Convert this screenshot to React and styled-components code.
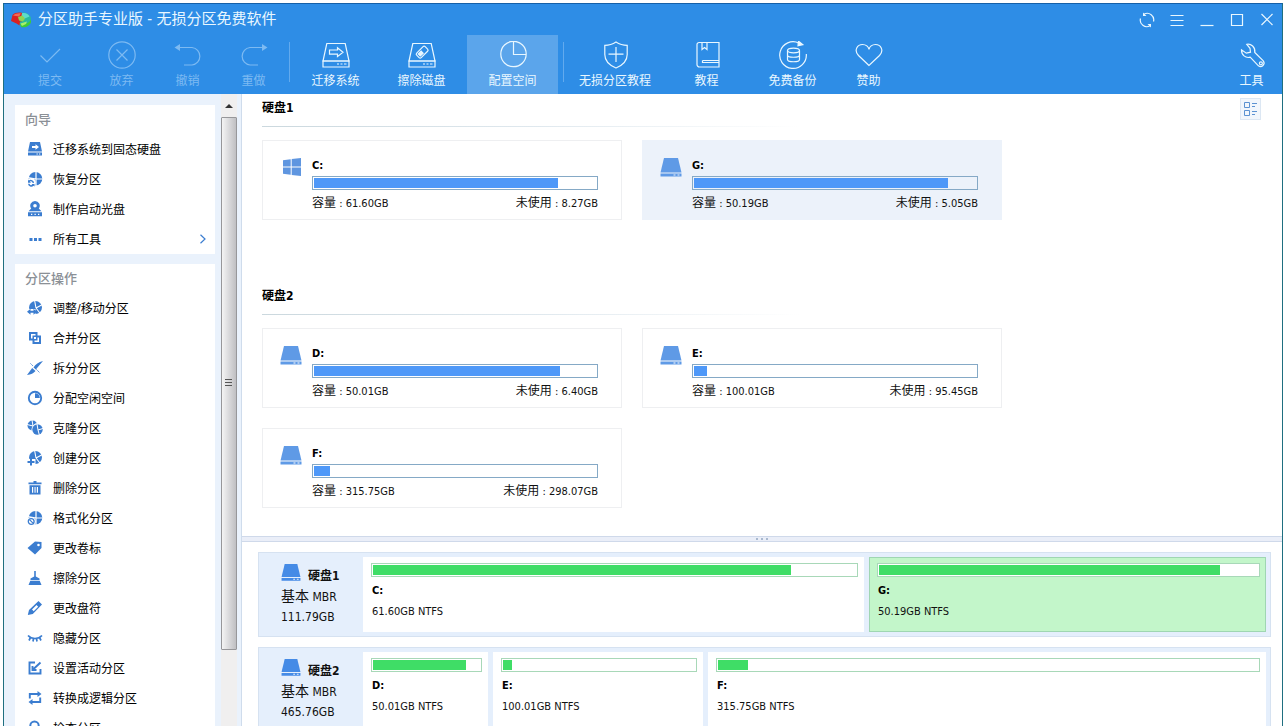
import React from "react";
import styled, { createGlobalStyle, css } from "styled-components";

const GlobalStyle = createGlobalStyle`
  *, *::before, *::after { box-sizing: border-box; }
  html, body { height: 100%; }
  body {
    margin: 0;
    overflow: hidden;
    background: #fff;
    color: #111;
    font: 12px/16px "DejaVu Sans Condensed", "Noto Sans CJK SC", sans-serif;
  }
  button { border: 0; padding: 0; background: none; font: inherit; color: inherit; cursor: default; }
  h1, h2, ul { margin: 0; padding: 0; }
  ul { list-style: none; }
  svg { display: block; flex: none; }
`;

/* ---------- window frame ---------- */

const Page = styled.div`
  height: 100vh;
  padding: 3px 4px 0 3px;
`;

const Window = styled.div`
  height: 100%;
  display: flex;
  flex-direction: column;
  overflow: hidden;
  border: 1px solid #1f6f80;
  border-top-color: #1560a8;
  border-bottom: 0;
`;

const Header = styled.header`
  flex: none;
  background: #2e8de6;
  color: #e9f7ff;
`;

const TitleBar = styled.div`
  display: flex;
  align-items: center;
  gap: 7px;
  height: 31px;
  padding-left: 7px;
`;

const Title = styled.h1`
  flex: 1;
  padding-bottom: 2px;
  font-size: 15px;
  line-height: 20px;
  font-weight: 400;
`;

const WindowControls = styled.div`
  display: flex;
`;

const WindowButton = styled.button`
  width: 30px;
  height: 31px;
  display: flex;
  align-items: center;
  justify-content: center;
`;

const Toolbar = styled.nav`
  display: flex;
  gap: 5px;
  height: 59px;
  padding-left: 10px;
`;

const ToolButton = styled.button`
  width: ${(p) => p.$width}px;
  padding-top: 6px;
  display: flex;
  flex-direction: column;
  align-items: center;
  gap: 4px;
  white-space: nowrap;
  ${(p) => p.$active && css`background: #5ba5eb;`}
  ${(p) => p.$end && css`margin-left: auto;`}
  &:disabled { color: #7dbaf2; }
`;

const ToolDivider = styled.span`
  width: 1px;
  height: 40px;
  margin-top: 7px;
  background: #62aaee;
`;

/* ---------- sidebar ---------- */

const Body = styled.div`
  flex: 1;
  min-height: 0;
  display: flex;
`;

const Sidebar = styled.aside`
  flex: none;
  display: flex;
  gap: 6px;
  padding: 0 4px 0 11px;
  background: #eaf2fc;
  border-right: 1px solid #cfdcec;
`;

const PanelList = styled.div`
  width: 200px;
  display: flex;
  flex-direction: column;
  gap: 10px;
  padding-top: 11px;
  overflow: hidden;
`;

const Panel = styled.section`
  flex: none;
  background: #fff;
`;

const PanelTitle = styled.h2`
  padding: 1px 0 0 10px;
  font-size: 13px;
  line-height: 28px;
  font-weight: 500;
  color: #8b9096;
`;

const ActionButton = styled.button`
  width: 100%;
  height: 30px;
  display: flex;
  align-items: center;
  gap: 10px;
  padding: 0 8px 0 12px;
  text-align: left;
  color: #000;
  svg { color: #3b7dd0; }
`;

const ActionLabel = styled.span`
  flex: 1;
  padding-top: 2px;
`;

const ScrollTrack = styled.div`
  width: 16px;
  display: flex;
  flex-direction: column;
  background: #f0efef;
`;

const ScrollArrow = styled.button`
  height: 23px;
  flex: none;
  display: flex;
  align-items: center;
  justify-content: center;
`;

const ScrollArea = styled.div`
  flex: 1;
  min-height: 0;
`;

const ScrollThumb = styled.div`
  height: 87.5%;
  display: flex;
  align-items: center;
  justify-content: center;
  border: 1px solid #97979a;
  border-radius: 1px;
  background: linear-gradient(to right, #f4f4f4, #dcdcde 45%, #bfbfc2);
`;

/* ---------- main area ---------- */

const Main = styled.main`
  flex: 1;
  min-width: 0;
  display: flex;
  flex-direction: column;
`;

const Overview = styled.div`
  flex: 0 0 70%;
  min-height: 0;
  display: flex;
  align-items: flex-start;
  padding: 0 21px 0 20px;
  overflow: hidden;
`;

const DiskSections = styled.div`
  flex: 1;
`;

const DiskSection = styled.section`
  padding-bottom: 62px;
`;

const DiskHeading = styled.h2`
  font-size: 12px;
  line-height: 28px;
  font-weight: 700;
  color: #000;
`;

const FadingLine = styled.div`
  width: 55%;
  height: 1px;
  margin: 4px 0 13px;
  background: linear-gradient(to right, #cbd8de, #dfe8ee 50%, #fff);
`;

const Cards = styled.div`
  display: grid;
  grid-template-columns: repeat(auto-fill, 360px);
  gap: 20px;
  max-width: 800px;
`;

const Card = styled.article`
  display: flex;
  gap: 10px;
  height: 80px;
  padding: 17px 23px 0 17px;
  border: 1px solid ${(p) => (p.$selected ? "#ecf2fa" : "#eeeff1")};
  background: ${(p) => (p.$selected ? "#ecf2fa" : "#fff")};
`;

const CardInfo = styled.div`
  flex: 1;
`;

const DriveName = styled.div`
  font-size: 11px;
  line-height: 16px;
  font-weight: 700;
  color: #000;
`;

const Bar = styled.div`
  height: 14px;
  padding: 1px;
  border: 1px solid ${(p) => (p.$green ? "#a8d8b8" : "#85a9c6")};
  background: ${(p) => (p.$clear ? "transparent" : "#fff")};
`;

const CardBar = styled(Bar)`
  margin: 2px 0 5px;
`;

const BarFill = styled.div`
  height: 100%;
  background: ${(p) => (p.$green ? "#3fdd66" : "#4e98f8")};
`;

const CardFacts = styled.div`
  display: flex;
  justify-content: space-between;
  font-size: 11px;
`;

const Cjk = styled.span`
  font-size: 12px;
`;

const ViewToggle = styled.button`
  width: 21px;
  height: 22px;
  margin-top: 4px;
  display: flex;
  align-items: center;
  justify-content: center;
  border: 1px solid #dce7f3;
  background: #f1f6fc;
`;

const Splitter = styled.div`
  flex: none;
  height: 6px;
  display: flex;
  align-items: center;
  justify-content: center;
  gap: 3px;
  border: solid #cfd9ea;
  border-width: 1px 0;
  background: #eaeef8;
`;

const SplitterDot = styled.span`
  width: 2px;
  height: 2px;
  background: #a9b9cf;
`;

/* ---------- disk map ---------- */

const DiskMap = styled.div`
  flex: 1;
  min-height: 0;
  display: flex;
  flex-direction: column;
  gap: 10px;
  padding: 10px 11px 0 16px;
  overflow: hidden;
`;

const DiskRow = styled.section`
  flex: none;
  height: 85px;
  display: flex;
  gap: 5px;
  padding: 4px;
  border: 1px solid #d6e2f1;
  background: #e5effc;
`;

const DiskLabel = styled.div`
  flex: none;
  width: 95px;
  padding: 7px 0 0 18px;
  line-height: 20px;
  white-space: nowrap;
`;

const DiskLabelHead = styled.div`
  display: flex;
  align-items: flex-start;
  gap: 7px;
  height: 22px;
`;

const DiskLabelName = styled.strong`
  align-self: flex-end;
`;

const DiskKind = styled.span`
  font-size: 14px;
`;

const Partition = styled.article`
  flex: ${(p) => p.$share} 1 0;
  min-width: 0;
  padding: 5px 5px 0 7px;
  border: 1px solid ${(p) => (p.$selected ? "#9fd6b2" : "#fff")};
  background: ${(p) => (p.$selected ? "#c3f6ca" : "#fff")};
`;

const PartitionText = styled.div`
  display: grid;
  gap: 5px;
  padding: 6px 0 0 1px;
  font-size: 11px;
  white-space: nowrap;
`;

/* ---------- icons ---------- */

const LineIcon = ({ size = 28, children, ...rest }) => (
  <svg width={size} height={size} viewBox={`0 0 ${size} ${size}`} fill="none" stroke="currentColor" strokeWidth="1.2" aria-hidden="true" {...rest}>
    {children}
  </svg>
);

const SolidIcon = ({ children }) => (
  <svg width="16" height="16" viewBox="0 0 16 16" fill="currentColor" aria-hidden="true">
    {children}
  </svg>
);

const driveOutline = (
  <>
    <path d="M4.8 2.5H23.2L27 20H1z" />
    <path d="M1 20H27V26H1z" />
    <path d="M15 23h2M18.5 23h2M22 23h2.5" />
  </>
);

const toolIcons = {
  commit: <LineIcon><path d="M4.5 14.5 11 21 24 8" /></LineIcon>,
  discard: <LineIcon><circle cx="14" cy="14" r="13.2" /><path d="M8.5 8.5l11 11M19.5 8.5l-11 11" /></LineIcon>,
  undo: (
    <LineIcon>
      <path d="M5 6.5H18a8.8 8.8 0 0 1 0 17.5H10" />
      <path d="M.5 6.500 6 3v7z" fill="currentColor" stroke="none" />
    </LineIcon>
  ),
  redo: (
    <LineIcon>
      <path d="M23 6.5H10A8.8 8.8 0 0 0 10 24H18" />
      <path d="M27.500 6.500 22 3v7z" fill="currentColor" stroke="none" />
    </LineIcon>
  ),
  migrate: (
    <LineIcon>
      {driveOutline}
      <path d="M7.5 9h8V6.8l5.5 4.4-5.5 4.4v-2.4h-8z" />
    </LineIcon>
  ),
  wipe: (
    <LineIcon>
      {driveOutline}
      <g transform="rotate(-45 14 11)">
        <rect x="8" y="8" width="12" height="6.4" rx="1.5" />
        <rect x="10" y="9.800" width="4" height="2.800" fill="currentColor" />
      </g>
    </LineIcon>
  ),
  allocate: <LineIcon><circle cx="14.500" cy="13" r="12.7" /><path d="M14.500 .5V13.5H27" /></LineIcon>,
  shield: (
    <LineIcon>
      <path d="M15 1C11.5 3.3 7.500 4.300 3.800 4.300V13.500C3.800 20 8.500 24.300 15 27C21.500 24.300 26.200 20 26.200 13.500V4.300C22.500 4.300 18.500 3.300 15 1z" />
      <path d="M15 6V21M7.500 13.200H22.500" />
    </LineIcon>
  ),
  book: (
    <LineIcon>
      <path d="M26 19.500V1.500H6a2 2 0 0 0-2 2V23.500a2.500 2.500 0 0 0 2.500 2.500H26V19.500H9.500" />
      <path d="M9 1.500V8.500L11.500 6.500 14 8.500V1.500M9.500 19.500V21.500H26" />
    </LineIcon>
  ),
  backup: (
    <LineIcon>
      <path d="M20 2.200A13.300 13.300 0 1 0 27.300 13" />
      <path d="M19.500 .200 23.800 3.600 19 4.800z" fill="currentColor" />
      <ellipse cx="14.500" cy="9.500" rx="6" ry="2.300" />
      <path d="M8.500 9.500V18.500c0 3 12 3 12 0V9.500M8.500 14c0 3 12 3 12 0" />
    </LineIcon>
  ),
  heart: <LineIcon><path d="M14 24.500 3.500 14.500C-1.500 9 2.500 3.500 7.500 3.500 11 3.500 13.500 6 14 8.500 14.500 6 17 3.500 20.500 3.500 25.500 3.500 29.500 9 24.500 14.500z" /></LineIcon>,
  wrench: (
    <LineIcon>
      <path d="M8.800 3.300C13 2.500 17.500 6 16.800 11.500L25.300 19.900a3.500 3.500 0 0 1-4.900 4.900L12.200 16.200C7.500 17.500 3.300 13.800 3.500 8.800L8.300 12.200 12.500 11.200 12 7.300z" />
      <circle cx="22.900" cy="22.300" r="1.500" />
    </LineIcon>
  ),
};

/* Disc cut in wedges, with a cleared spot for a badge in the lower left corner. */
const disc = (
  <>
    <circle cx="8.500" cy="7.500" r="6.500" />
    <path d="M9 8 7.500 0M9 8 15.500 4.500M9 8 14 14.500" stroke="#fff" strokeWidth="1.100" />
    <path d="M0 9H8.500V16H0z" fill="#fff" />
  </>
);

const quarteredDisc = (
  <>
    <circle cx="8.500" cy="7.800" r="6.800" />
    <path d="M9 0V16M9 8H16M9 8 1 6.500" stroke="#fff" strokeWidth="1.200" />
    <circle cx="4.300" cy="11.500" r="4.500" fill="#fff" />
  </>
);

const actionIcons = {
  migrate: (
    <SolidIcon>
      <path fillRule="evenodd" d="M3 1H13L15 10.500H1zM5 5V7H8.500V8.800L12 6 8.500 3.200V5z" />
      <path fillRule="evenodd" d="M1 11.500H15V14.500H1zM9.500 12.500V13.500H10.800V12.500zM12 12.500V13.500H13.300V12.500z" />
    </SolidIcon>
  ),
  recover: (
    <SolidIcon>
      {quarteredDisc}
      <path d="M1 8.500 1.800 9.600A3.200 3.200 0 0 1 7 12H5.600A1.900 1.900 0 0 0 2.800 10.500L4 11.700H1z" />
      <path d="M1 12.800H2.500A1.900 1.900 0 0 0 5.300 13.800L4.500 13H7.500V15.500L6.500 14.800A3.300 3.300 0 0 1 1 12.800z" />
    </SolidIcon>
  ),
  media: (
    <SolidIcon>
      <path fillRule="evenodd" d="M8 0A4.700 4.700 0 0 1 11.800 7.500L14.500 10.300H1.500L4.200 7.500A4.700 4.700 0 0 1 8 0zM8 3A1.800 1.800 0 1 0 8 6.600 1.800 1.800 0 0 0 8 3z" />
      <path fillRule="evenodd" d="M1 11.300H15V15.300H1zM4 12.700V14H5.300V12.700zM7.500 12.700V14H8.800V12.700zM11 12.700V14H12.300V12.700z" />
    </SolidIcon>
  ),
  all: <SolidIcon><path d="M2.500 7H5.500V10H2.500zM7 7H10V10H7zM11.500 7H14.500V10H11.500z" /></SolidIcon>,
  resize: (
    <SolidIcon>
      {disc}
      <path d="M0 11.800 3.500 8.800V10.800H6.500V8.800L10 11.800 6.500 14.800V12.800H3.500V14.800z" />
    </SolidIcon>
  ),
  merge: (
    <SolidIcon>
      <path fillRule="evenodd" d="M2 2H10.500V5.500H14V14H5.500V10.500H2zM4 4V8.500H5.500V5.500H8.500V4zM7 7V9H9V7zM10.500 7.500V10.500H7.500V12H12V7.500z" />
    </SolidIcon>
  ),
  split: (
    <SolidIcon>
      <path d="M16 1 8.800 9.500 6.500 7.500C8.500 4.500 11.500 2 16 1zM5.200 8 8.500 11C6.500 13.500 4 14.500 0 15z" />
      <path d="M3.500 3.500 6 6M9.500 9.500 13 13" stroke="currentColor" strokeWidth="1" strokeDasharray="1.500 1" />
    </SolidIcon>
  ),
  allocate: (
    <SolidIcon>
      <circle cx="8" cy="8" r="6.200" fill="none" stroke="currentColor" strokeWidth="1.900" />
      <path d="M8 3.200A4.800 4.800 0 0 1 12.800 8H8z" />
    </SolidIcon>
  ),
  clone: (
    <SolidIcon>
      <circle cx="5.500" cy="5.500" r="5" />
      <path d="M6 6 0 4.500M6 6 5 0M6 6 11 2" stroke="#fff" />
      <circle cx="10.500" cy="9.500" r="6" fill="#fff" />
      <circle cx="10.500" cy="9.500" r="5.200" />
      <path d="M11 10 10 4M11 10 16 8.500M11 10 12.500 15.500" stroke="#fff" />
    </SolidIcon>
  ),
  create: (
    <SolidIcon>
      {disc}
      <path d="M3 8.700H5V11H7.500V13H5V15.500H3V13H.500V11H3z" />
    </SolidIcon>
  ),
  remove: (
    <SolidIcon>
      <path d="M6.500 1H9.500V2.500H14.500V4.300H1.500V2.500H6.500z" />
      <path fillRule="evenodd" d="M2.500 5.300H13.500V14.500H2.500zM5 7V12.800H6.200V7zM7.500 7V12.800H8.600V7zM9.800 7V12.800H11V7z" />
    </SolidIcon>
  ),
  format: (
    <SolidIcon>
      {quarteredDisc}
      <circle cx="4.200" cy="11.500" r="2.900" fill="none" stroke="currentColor" strokeWidth="1.300" />
      <path d="M2.500 9.700 6 13.200" stroke="currentColor" strokeWidth="1.200" />
    </SolidIcon>
  ),
  tag: <SolidIcon><path fillRule="evenodd" d="M8 1.500 14.500 2 14.500 8 8 14.500 .500 8zM11.500 3.700A1.300 1.300 0 1 0 11.500 6.300 1.300 1.300 0 0 0 11.500 3.700z" /></SolidIcon>,
  broom: <SolidIcon><path d="M7.200 1H8.800V6.500L12.500 8.500V10H3.500V8.500L7.200 6.500zM3.300 10.700H12.700L14.500 15H1.500z" /></SolidIcon>,
  pencil: (
    <SolidIcon>
      <path fillRule="evenodd" d="M11.500 1 15 4.500 5.800 14 .800 15 2 10zM9.500 5 5 9.500 6.700 11.200 11.200 6.700z" />
    </SolidIcon>
  ),
  hide: (
    <LineIcon size={16} strokeWidth="1.700">
      <path d="M1 5.500C5 9.500 11 9.500 15 5.500M3.500 7.500 2 10.500M6.500 8.500 6 11.500M9.500 8.500 10 11.500M12.500 7.500 14 10.500" />
    </LineIcon>
  ),
  active: (
    <LineIcon size={16} strokeWidth="1.900">
      <path d="M8 2.500H2.500V13.500H13.500V9M5.500 6V10H9.500M6 9.500 13.500 2.500" />
    </LineIcon>
  ),
  convert: (
    <SolidIcon>
      <path fill="none" stroke="currentColor" strokeWidth="1.900" d="M2.800 8.500V4H11.500M13.200 7.500V12H4.500" />
      <path d="M10.500 1 14.500 4 10.500 7zM5.500 9V15L1.500 12z" />
    </SolidIcon>
  ),
  check: (
    <LineIcon size={16} strokeWidth="2">
      <circle cx="7.500" cy="5.800" r="4.200" /><path d="M10.500 8.500 14.500 13" />
    </LineIcon>
  ),
};

const DriveIcon = ({ width = 22, color = "#5f9ae6" }) => (
  <svg width={width} height={width - 2} viewBox="0 0 22 20" fill={color} aria-hidden="true">
    <path d="M4 0H18L21.500 14.500H.500z" />
    <path fillRule="evenodd" d="M.500 15.500H21.500V18.500H.500zM13.500 16.500V17.500H15.500V16.500zM17.500 16.500V17.500H19.500V16.500z" />
  </svg>
);

const WindowsIcon = () => (
  <svg width="22" height="20" viewBox="0 0 22 20" fill="#5f96e0" aria-hidden="true">
    <path d="M3 2.200 10.700 1.200V8.500H3zM11.700 1 21 0V8.500H11.700zM3 9.600H10.700V16.800L3 15.800zM11.700 9.600H21V18L11.700 17z" />
  </svg>
);

const Logo = () => (
  <svg width="20" height="18" viewBox="0 0 20 18" aria-hidden="true">
    <ellipse cx="12" cy="8" rx="8" ry="6.500" fill="#27b9a0" />
    <path d="M20 8.500V11C19 15 14.500 17 10 16L9 13C14 13.500 18.500 12 20 8.500z" fill="#3ecb35" />
    <path d="M9 3.500C12 .800 17 2 18.500 5.500L12.500 8z" fill="#5cdccc" />
    <path d="M0 10 1.500 4C4 1.500 8 1 11 2L10 8 12 10 9 10.500 8.500 14.500 5.500 12.500z" fill="#d92222" />
    <path d="M2 4.500C4 2.500 7.500 2 10 2.500L8 5.500z" fill="#f36b55" />
    <path d="M7 6 11.500 4.500 14 7.500 12 10.500 8 9.500z" fill="#8fd452" />
    <path d="M9.500 12.500 16 10.500 15 13 11 15z" fill="#a8f06a" />
  </svg>
);

/* ---------- data ---------- */

const TOOLS = [
  { icon: "commit", label: "提交", width: 72, disabled: true },
  { icon: "discard", label: "放弃", width: 61, disabled: true },
  { icon: "undo", label: "撤销", width: 61, disabled: true },
  { icon: "redo", label: "重做", width: 61, disabled: true },
  { divider: true },
  { icon: "migrate", label: "迁移系统", width: 81 },
  { icon: "wipe", label: "擦除磁盘", width: 81 },
  { icon: "allocate", label: "配置空间", width: 91, active: true },
  { divider: true },
  { icon: "shield", label: "无损分区教程", width: 92 },
  { icon: "book", label: "教程", width: 81 },
  { icon: "backup", label: "免费备份", width: 81 },
  { icon: "heart", label: "赞助", width: 61 },
  { icon: "wrench", label: "工具", width: 61, end: true },
];

const PANELS = [
  {
    title: "向导",
    actions: [
      { icon: "migrate", label: "迁移系统到固态硬盘" },
      { icon: "recover", label: "恢复分区" },
      { icon: "media", label: "制作启动光盘" },
      { icon: "all", label: "所有工具", more: true },
    ],
  },
  {
    title: "分区操作",
    actions: [
      { icon: "resize", label: "调整/移动分区" },
      { icon: "merge", label: "合并分区" },
      { icon: "split", label: "拆分分区" },
      { icon: "allocate", label: "分配空闲空间" },
      { icon: "clone", label: "克隆分区" },
      { icon: "create", label: "创建分区" },
      { icon: "remove", label: "删除分区" },
      { icon: "format", label: "格式化分区" },
      { icon: "tag", label: "更改卷标" },
      { icon: "broom", label: "擦除分区" },
      { icon: "pencil", label: "更改盘符" },
      { icon: "hide", label: "隐藏分区" },
      { icon: "active", label: "设置活动分区" },
      { icon: "convert", label: "转换成逻辑分区" },
      { icon: "check", label: "检查分区" },
    ],
  },
];

const DISKS = [
  {
    name: "硬盘1",
    size: "111.79GB",
    drives: [
      { letter: "C:", total: "61.60", free: "8.27", share: 487, system: true },
      { letter: "G:", total: "50.19", free: "5.05", share: 383, selected: true },
    ],
  },
  {
    name: "硬盘2",
    size: "465.76GB",
    drives: [
      { letter: "D:", total: "50.01", free: "6.40", share: 111 },
      { letter: "E:", total: "100.01", free: "95.45", share: 196 },
      { letter: "F:", total: "315.75", free: "298.07", share: 544 },
    ],
  },
];

const usedPercent = (d) => `${(1 - d.free / d.total) * 100}%`;

/* ---------- parts ---------- */

const DriveCard = ({ drive }) => (
  <Card $selected={drive.selected}>
    {drive.system ? <WindowsIcon /> : <DriveIcon />}
    <CardInfo>
      <DriveName>{drive.letter}</DriveName>
      <CardBar $clear={drive.selected}>
        <BarFill style={{ width: usedPercent(drive) }} />
      </CardBar>
      <CardFacts>
        <span><Cjk>容量</Cjk> : {drive.total}GB</span>
        <span><Cjk>未使用</Cjk> : {drive.free}GB</span>
      </CardFacts>
    </CardInfo>
  </Card>
);

const DiskMapRow = ({ disk }) => (
  <DiskRow>
    <DiskLabel>
      <DiskLabelHead>
        <DriveIcon width={20} color="#458be6" />
        <DiskLabelName>{disk.name}</DiskLabelName>
      </DiskLabelHead>
      <div><DiskKind>基本</DiskKind> MBR</div>
      <div>{disk.size}</div>
    </DiskLabel>
    {disk.drives.map((d) => (
      <Partition key={d.letter} $share={d.share} $selected={d.selected}>
        <Bar $green>
          <BarFill $green style={{ width: usedPercent(d) }} />
        </Bar>
        <PartitionText>
          <DriveName>{d.letter}</DriveName>
          <div>{d.total}GB NTFS</div>
        </PartitionText>
      </Partition>
    ))}
  </DiskRow>
);

export default function App() {
  return (
    <>
      <GlobalStyle />
      <Page>
        <Window>
          <Header>
            <TitleBar>
              <Logo />
              <Title>分区助手专业版 - 无损分区免费软件</Title>
              <WindowControls>
                <WindowButton aria-label="刷新">
                  <LineIcon size={16}>
                    <path d="M5 2.200A6.500 6.500 0 0 1 14.500 9.500M11 13.800A6.500 6.500 0 0 1 1.500 6.500" />
                    <path d="M4 .500V4H7.500zM12 15.500V12H8.500z" fill="currentColor" stroke="none" />
                  </LineIcon>
                </WindowButton>
                <WindowButton aria-label="菜单">
                  <LineIcon size={14}><path d="M.500 2.500H13.500M.500 7.500H13.500M.500 12.500H13.500" /></LineIcon>
                </WindowButton>
                <WindowButton aria-label="最小化">
                  <LineIcon size={14}><path d="M.500 12.500H13.500" /></LineIcon>
                </WindowButton>
                <WindowButton aria-label="最大化">
                  <LineIcon size={14}><path d="M1.500 1.500H12.500V12.500H1.500z" /></LineIcon>
                </WindowButton>
                <WindowButton aria-label="关闭">
                  <LineIcon size={14}><path d="M1.500 1 12.500 12M12.500 1 1.500 12" /></LineIcon>
                </WindowButton>
              </WindowControls>
            </TitleBar>
            <Toolbar>
              {TOOLS.map((t, i) =>
                t.divider ? (
                  <ToolDivider key={i} />
                ) : (
                  <ToolButton key={i} $width={t.width} $active={t.active} $end={t.end} disabled={t.disabled}>
                    {toolIcons[t.icon]}
                    <span>{t.label}</span>
                  </ToolButton>
                )
              )}
            </Toolbar>
          </Header>
          <Body>
            <Sidebar>
              <PanelList>
                {PANELS.map((p) => (
                  <Panel key={p.title}>
                    <PanelTitle>{p.title}</PanelTitle>
                    <ul>
                      {p.actions.map((a) => (
                        <li key={a.label}>
                          <ActionButton>
                            {actionIcons[a.icon]}
                            <ActionLabel>{a.label}</ActionLabel>
                            {a.more && (
                              <svg width="8" height="10" viewBox="0 0 8 10" fill="none" stroke="currentColor" strokeWidth="1.200" aria-hidden="true">
                                <path d="M1.500 .800 6 5 1.500 9.200" />
                              </svg>
                            )}
                          </ActionButton>
                        </li>
                      ))}
                    </ul>
                  </Panel>
                ))}
              </PanelList>
              <ScrollTrack>
                <ScrollArrow aria-label="向上滚动">
                  <svg width="8" height="4" viewBox="0 0 8 4" fill="#333" aria-hidden="true"><path d="M4 0 8 4H0z" /></svg>
                </ScrollArrow>
                <ScrollArea>
                  <ScrollThumb>
                    <svg width="8" height="8" viewBox="0 0 8 8" stroke="#555" aria-hidden="true"><path d="M0 .500H7M0 3.500H7M0 6.500H7" /></svg>
                  </ScrollThumb>
                </ScrollArea>
              </ScrollTrack>
            </Sidebar>
            <Main>
              <Overview>
                <DiskSections>
                  {DISKS.map((disk) => (
                    <DiskSection key={disk.name}>
                      <DiskHeading>{disk.name}</DiskHeading>
                      <FadingLine />
                      <Cards>
                        {disk.drives.map((d) => (
                          <DriveCard key={d.letter} drive={d} />
                        ))}
                      </Cards>
                    </DiskSection>
                  ))}
                </DiskSections>
                <ViewToggle aria-label="切换视图">
                  <svg width="14" height="14" viewBox="0 0 14 14" fill="none" stroke="#5b92d2" aria-hidden="true">
                    <path d="M.500 .500H5.500V5.500H.500zM.500 8.500H5.500V13.500H.500zM8 1.500H13M8 4.500H11M8 9.500H13M8 12.500H11" />
                  </svg>
                </ViewToggle>
              </Overview>
              <Splitter>
                <SplitterDot />
                <SplitterDot />
                <SplitterDot />
              </Splitter>
              <DiskMap>
                {DISKS.map((disk) => (
                  <DiskMapRow key={disk.name} disk={disk} />
                ))}
              </DiskMap>
            </Main>
          </Body>
        </Window>
      </Page>
    </>
  );
}
